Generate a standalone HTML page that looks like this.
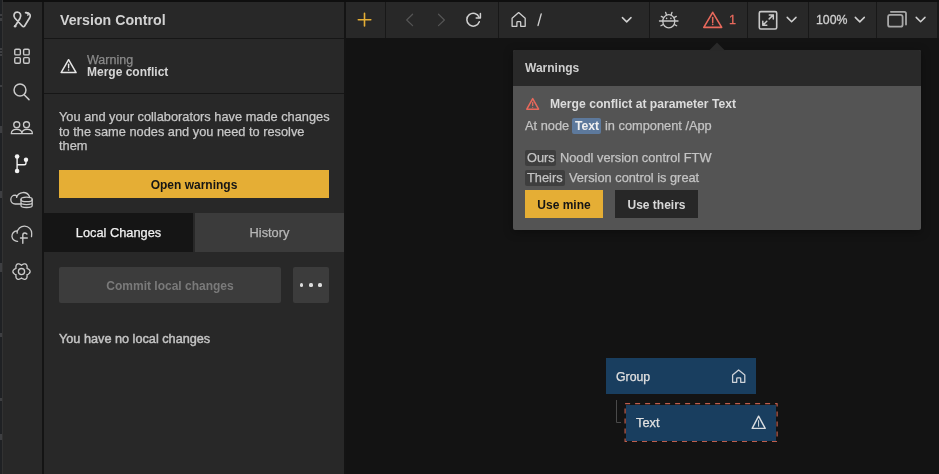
<!DOCTYPE html>
<html><head><meta charset="utf-8">
<style>
*{box-sizing:border-box;margin:0;padding:0}
html,body{width:939px;height:474px;overflow:hidden;background:#131313;font-family:"Liberation Sans",sans-serif;-webkit-font-smoothing:antialiased}
.a{position:absolute}
.t{position:absolute;white-space:nowrap;line-height:16px;will-change:transform}
.n{font-size:12.8px;-webkit-text-stroke:0.25px currentColor}
.b{font-weight:700;font-size:12px}
svg{position:absolute;overflow:visible}
</style></head><body>
<!-- top strip -->
<div class="a" style="left:3px;top:0;width:936px;height:2px;background:#0f0f0f"></div>
<!-- left edge strip -->
<div class="a" style="left:0;top:0;width:2px;height:474px;background:#1f2124"></div>
<div class="a" style="left:2px;top:0;width:1px;height:474px;background:#323232"></div>
<div class="a" style="left:0;top:14px;width:2px;height:2px;background:#3e3f42"></div>
<div class="a" style="left:0;top:18px;width:2px;height:3px;background:#3e3f42"></div>
<div class="a" style="left:0;top:48px;width:2px;height:2px;background:#3e3f42"></div>
<div class="a" style="left:0;top:51px;width:2px;height:2px;background:#3e3f42"></div>
<div class="a" style="left:0;top:54px;width:2px;height:2px;background:#3e3f42"></div>
<div class="a" style="left:0;top:85px;width:2px;height:2px;background:#3e3f42"></div>
<div class="a" style="left:0;top:126px;width:2px;height:7px;background:#3e3f42"></div>
<div class="a" style="left:0;top:191px;width:2px;height:7px;background:#3e3f42"></div>
<div class="a" style="left:0;top:263px;width:2px;height:9px;background:#3e3f42"></div>
<div class="a" style="left:0;top:333px;width:2px;height:4px;background:#3e3f42"></div>
<div class="a" style="left:0;top:398px;width:2px;height:3px;background:#3e3f42"></div>
<div class="a" style="left:0;top:434px;width:2px;height:6px;background:#3e3f42"></div>
<!-- sidebar -->
<div class="a" style="left:3px;top:2px;width:39px;height:472px;background:#282828"></div>
<div class="a" style="left:42px;top:2px;width:2px;height:472px;background:#141414"></div>
<!-- panel -->
<div class="a" style="left:44px;top:2px;width:300px;height:472px;background:#282828"></div>
<div class="a" style="left:344px;top:2px;width:2px;height:472px;background:#141414"></div>
<div class="a" style="left:44px;top:38px;width:300px;height:1px;background:#161616"></div>
<div class="a" style="left:44px;top:93px;width:300px;height:1px;background:#161616"></div>

<div class="t" style="left:60px;top:12px;font-size:14.2px;font-weight:700;color:#d2d2d2">Version Control</div>

<div class="t" style="left:87px;top:52px;font-size:12.5px;color:#8a8a8a;-webkit-text-stroke:0.25px #8a8a8a">Warning</div>
<div class="t b" style="left:87px;top:64px;color:#d6d6d6">Merge conflict</div>

<div class="t n" style="left:59px;top:110.4px;color:#c8c8c8;line-height:14.5px;white-space:normal;width:290px">You and your collaborators have made changes<br>to the same nodes and you need to resolve<br>them</div>

<div class="a" style="left:59px;top:170px;width:270px;height:28px;background:#e5ae35"></div>
<div class="t b" style="left:59px;width:270px;text-align:center;top:177px;color:#151515">Open warnings</div>

<div class="a" style="left:44px;top:213px;width:149px;height:39px;background:#151515"></div>
<div class="a" style="left:195px;top:213px;width:149px;height:39px;background:#3b3b3b"></div>
<div class="t n" style="left:44px;width:149px;text-align:center;top:225px;color:#f0f0f0">Local Changes</div>
<div class="t n" style="left:195px;width:149px;text-align:center;top:225px;color:#b8b8b8">History</div>

<div class="a" style="left:59px;top:267px;width:222px;height:36px;background:#3c3c3c;border-radius:2px"></div>
<div class="t b" style="left:59px;width:222px;text-align:center;top:278px;color:#7a7a7a">Commit local changes</div>
<div class="a" style="left:293px;top:267px;width:36px;height:36px;background:#3c3c3c;border-radius:2px"></div>
<div class="a" style="left:300.0px;top:283.4px;width:3.2px;height:3.2px;border-radius:50%;background:#dcdcdc"></div>
<div class="a" style="left:309.4px;top:283.4px;width:3.2px;height:3.2px;border-radius:50%;background:#dcdcdc"></div>
<div class="a" style="left:318.4px;top:283.4px;width:3.2px;height:3.2px;border-radius:50%;background:#dcdcdc"></div>

<div class="t" style="left:59px;top:331.2px;color:#c4c4c4;font-size:12.7px;-webkit-text-stroke:0.45px #c4c4c4">You have no local changes</div>

<!-- toolbar -->
<div class="a" style="left:346px;top:2px;width:593px;height:36px;background:#282828"></div>
<div class="a" style="left:385px;top:2px;width:1px;height:36px;background:#181818"></div>
<div class="a" style="left:498px;top:2px;width:1px;height:36px;background:#181818"></div>
<div class="a" style="left:649px;top:2px;width:1px;height:36px;background:#181818"></div>
<div class="a" style="left:747px;top:2px;width:1px;height:36px;background:#181818"></div>
<div class="a" style="left:808px;top:2px;width:1px;height:36px;background:#181818"></div>
<div class="a" style="left:876px;top:2px;width:1px;height:36px;background:#181818"></div>
<div class="a" style="left:937px;top:2px;width:2px;height:36px;background:#181818"></div>

<div class="t" style="left:816px;top:12px;font-size:12.3px;color:#d0d0d0;-webkit-text-stroke:0.3px #d0d0d0">100%</div>
<div class="t" style="left:728.5px;top:12px;font-size:12.5px;color:#e8695c;-webkit-text-stroke:0.3px #e8695c">1</div>

<!-- popup -->
<div class="a" style="left:513px;top:50px;width:408px;height:180px;background:#545454;border-radius:2px;box-shadow:0 2px 10px rgba(0,0,0,0.35)"></div>
<div class="a" style="left:513px;top:50px;width:408px;height:36px;background:#292929;border-radius:2px 2px 0 0"></div>
<svg style="left:0;top:0" width="1" height="1"><path d="M709 50.5 L717 42.5 L725 50.5 Z" fill="#292929"/></svg>
<div class="t b" style="left:525px;top:60px;color:#cfcfcf">Warnings</div>

<div class="t b" style="left:549.5px;top:96.4px;color:#dcdcdc;font-size:12.15px">Merge conflict at parameter Text</div>
<div class="t n" style="left:525px;top:118px;color:#c4c4c4">At node</div>
<div class="a" style="left:572px;top:118px;width:29px;height:16px;background:#5d799c;border-radius:2px"></div>
<div class="t b" style="left:575px;top:118px;color:#f0f0f0;font-size:12.2px">Text</div>
<div class="t n" style="left:605px;top:118px;color:#c4c4c4">in component /App</div>

<div class="a" style="left:525px;top:150px;width:31px;height:16px;background:#3e3e3e;border-radius:2px"></div>
<div class="t n" style="left:527px;top:150px;color:#c4c4c4">Ours</div>
<div class="t n" style="left:560px;top:150px;color:#c4c4c4">Noodl version control FTW</div>
<div class="a" style="left:525px;top:170px;width:40px;height:16px;background:#3e3e3e;border-radius:2px"></div>
<div class="t n" style="left:527px;top:170px;color:#c4c4c4">Theirs</div>
<div class="t n" style="left:569px;top:170px;color:#c4c4c4">Version control is great</div>

<div class="a" style="left:525px;top:190px;width:78px;height:28px;background:#e5ae35"></div>
<div class="t b" style="left:525px;width:78px;text-align:center;top:196.5px;color:#151515">Use mine</div>
<div class="a" style="left:615px;top:190px;width:83px;height:28px;background:#272727"></div>
<div class="t b" style="left:615px;width:83px;text-align:center;top:196.5px;color:#d8d8d8">Use theirs</div>

<!-- nodes -->
<div class="a" style="left:606px;top:358.3px;width:150px;height:36.2px;background:#193e5f"></div>
<div class="t" style="left:616px;top:369.2px;font-size:12.3px;color:#e0e0e0;-webkit-text-stroke:0.25px #e0e0e0">Group</div>
<div class="a" style="left:626px;top:404.5px;width:150px;height:36px;background:#193e5f"></div>
<div class="t" style="left:636px;top:415px;font-size:12.8px;color:#e0e0e0;-webkit-text-stroke:0.25px #e0e0e0">Text</div>

<svg style="left:0;top:0" width="939" height="474" viewBox="0 0 939 474" fill="none" stroke-linecap="round" stroke-linejoin="round">
  <!-- node dashed border + connector -->
  <rect x="625.1" y="403.6" width="152" height="37.9" stroke="#bd5d4d" stroke-width="1.2" stroke-dasharray="5 5" stroke-linecap="butt"/>
  <path d="M616.5 400 V422.5 H621" stroke="#4a4a4a" stroke-width="1" stroke-linecap="butt"/>
  <!-- node icons -->
  <path d="M732.6 382.3 V374.9 L738.6 370 L744.8 374.9 V382.3 H740.7 V378.5 Q740.7 377.9 740.1 377.9 H737.3 Q736.7 377.9 736.7 378.5 V382.3 Z" stroke="#cdd2d8" stroke-width="1.3"/>
  <path d="M758.6 416.2 L765.2 428.4 H752.2 Z" stroke="#d8dce0" stroke-width="1.4"/>
  <path d="M758.6 420.6 V426.3" stroke="#d8dce0" stroke-width="1"/>

  <!-- panel warning icon -->
  <path d="M68.6 59.7 L76.1 72.6 H61.1 Z" stroke="#e6e6e6" stroke-width="1.5"/>
  <path d="M68.6 64.3 V67.7" stroke="#e6e6e6" stroke-width="1.4"/>
  <circle cx="68.6" cy="70" r="0.8" fill="#e6e6e6" stroke="none"/>
  <!-- popup warning icon -->
  <path d="M532.7 98.6 L538.6 109.2 H526.8 Z" stroke="#e8695c" stroke-width="1.5"/>
  <path d="M532.7 102.4 V105.4" stroke="#e8695c" stroke-width="1.3"/>
  <circle cx="532.7" cy="107.3" r="0.6" fill="#e8695c" stroke="none"/>

  <!-- toolbar icons -->
  <path d="M358.3 19.8 H370.8 M364.5 13.2 V26" stroke="#e5ae35" stroke-width="1.6"/>
  <path d="M412.6 14.2 L406.7 20 L412.6 25.6" stroke="#555" stroke-width="1.2"/>
  <path d="M438.5 14.2 L444.4 20 L438.5 25.6" stroke="#555" stroke-width="1.2"/>
  <path d="M479.3 21.8 A6.4 6.4 0 1 1 479.2 17.4" stroke="#d0d0d0" stroke-width="1.5"/>
  <path d="M480.4 13.6 V17.9 H476.2" stroke="#d0d0d0" stroke-width="1.5"/>
  <path d="M512.1 26.3 V18.3 L518.66 12.6 L525.2 18.3 V26.3 H520.7 V22.4 Q520.7 21.7 520 21.7 H517.6 Q516.9 21.7 516.9 22.4 V26.3 Z" stroke="#cfcfcf" stroke-width="1.3"/>
  <path d="M541.2 14 L538 25.5" stroke="#cfcfcf" stroke-width="1.3"/>
  <path d="M622.4 17.6 L626.7 21.9 L631 17.6" stroke="#d0d0d0" stroke-width="1.5"/>
  <!-- bug -->
  <ellipse cx="668.8" cy="21.3" rx="6" ry="6.6" stroke="#c8c8c8" stroke-width="1.3"/>
  <path d="M659.5 21 H678" stroke="#c8c8c8" stroke-width="1.3"/>
  <path d="M666.5 15 L665.6 12.3 M671.1 15 L672 12.3 M663.2 17.4 L661.3 16.4 M674.4 17.4 L676.3 16.4 M663.1 24.6 L660.9 25.8 M674.5 24.6 L676.7 25.8" stroke="#c8c8c8" stroke-width="1.3"/>
  <circle cx="666.6" cy="18.4" r="0.8" fill="#c8c8c8" stroke="none"/>
  <circle cx="670.9" cy="18.4" r="0.8" fill="#c8c8c8" stroke="none"/>
  <!-- red warning -->
  <path d="M712.7 12.3 L721.7 27.4 H703.8 Z" stroke="#e8695c" stroke-width="1.6"/>
  <path d="M712.7 17.6 V22.5" stroke="#e8695c" stroke-width="1.5"/>
  <circle cx="712.7" cy="24.4" r="0.8" fill="#e8695c" stroke="none"/>
  <!-- expand -->
  <rect x="759.3" y="11.6" width="17.4" height="17.4" rx="1.5" stroke="#c8c8c8" stroke-width="1.6"/>
  <path d="M762.8 25.3 L766.8 21.3 M769.2 18.9 L773.3 14.9 M769.3 14.9 H773.3 V18.9 M762.8 21.3 V25.3 H766.8" stroke="#c8c8c8" stroke-width="1.5"/>
  <path d="M787.2 17.4 L791.6 21.8 L796 17.4" stroke="#d0d0d0" stroke-width="1.5"/>
  <path d="M855.3 17.4 L859.8 21.9 L864.3 17.4" stroke="#d0d0d0" stroke-width="1.5"/>
  <!-- windows -->
  <rect x="888.1" y="14.9" width="14.5" height="11.8" rx="2" stroke="#a8a8a8" stroke-width="1.8"/>
  <path d="M890.9 11.8 H904.3 Q906 11.8 906 13.5 V24.6" stroke="#a8a8a8" stroke-width="1.8"/>
  <path d="M916.2 17.4 L920.6 21.8 L925 17.4" stroke="#d0d0d0" stroke-width="1.5"/>

  <!-- sidebar icons -->
  <path d="M15.1 26.2 L20 18.2 C21.5 15.5 20.5 12.2 17.3 12.2 C14.2 12.2 13 15.5 14.8 18 L22.2 26 C23 27 24 27 24.6 26 L29.8 17.5 C30.7 16 30.2 14 28.5 13.3 L25.6 12.6" stroke="#cfcfcf" stroke-width="1.7"/>
  <circle cx="15.1" cy="26.2" r="1.3" fill="#cfcfcf" stroke="none"/>
  <path d="M26.2 12.4 L28.6 13.2 L27.8 15.2" stroke="#cfcfcf" stroke-width="1.4"/>
  <rect x="14.75" y="49.3" width="5.6" height="5.6" rx="1.2" stroke="#cacaca" stroke-width="1.4"/>
  <rect x="23.6" y="49.3" width="5.6" height="5.6" rx="1.2" stroke="#cacaca" stroke-width="1.4"/>
  <rect x="14.75" y="57.6" width="5.6" height="5.6" rx="1.2" stroke="#cacaca" stroke-width="1.4"/>
  <rect x="23.6" y="57.6" width="5.6" height="5.6" rx="1.2" stroke="#cacaca" stroke-width="1.4"/>
  <circle cx="20" cy="90" r="5.95" stroke="#cacaca" stroke-width="1.5"/>
  <path d="M24.4 95 L29 99.6" stroke="#cacaca" stroke-width="1.5"/>
  <circle cx="16.75" cy="124.75" r="3" stroke="#cacaca" stroke-width="1.3"/>
  <circle cx="26.5" cy="124.75" r="3" stroke="#cacaca" stroke-width="1.3"/>
  <path d="M11.3 133.7 C11.3 130.6 13.6 129.3 16.6 129.3 C19.6 129.3 21.9 130.6 21.9 133.7 Z M21.9 133.7 C21.9 130.6 24.2 129.3 27.2 129.3 C30.2 129.3 32.4 130.6 32.4 133.7 Z" stroke="#cacaca" stroke-width="1.3"/>
  <!-- branch -->
  <path d="M17.1 156.5 V171 M17.1 164.8 H24.3 Q26 164.8 26 163 V159.8" stroke="#f2f2f2" stroke-width="1.4"/>
  <circle cx="17.1" cy="156.5" r="2.3" fill="#f2f2f2" stroke="none"/>
  <circle cx="17.1" cy="171" r="2.3" fill="#f2f2f2" stroke="none"/>
  <circle cx="26" cy="159.8" r="2.2" fill="#f2f2f2" stroke="none"/>
  <!-- cloud db -->
  <path d="M20.6 204 H15.2 A4.4 4.4 0 0 1 15.2 195.2 Q16.8 195.3 16.7 197.4 M16.6 197.4 A6.9 6.9 0 0 1 29.5 196.6" stroke="#cacaca" stroke-width="1.3"/>
  <path d="M21 199.4 V205.4 A5.6 2.1 0 0 0 32.2 205.4 V199.4" fill="#272727" stroke="none"/>
  <ellipse cx="26.6" cy="199.4" rx="5.6" ry="2.2" fill="#272727" stroke="#cacaca" stroke-width="1.3"/>
  <path d="M21 199.4 V205.4 A5.6 2.1 0 0 0 32.2 205.4 V199.4 M21 202.5 A5.6 2.1 0 0 0 32.2 202.5" stroke="#cacaca" stroke-width="1.3"/>
  <!-- cloud f -->
  <path d="M17.6 241.3 A5.2 5.2 0 1 1 16.7 230.9 Q17.4 232 17.2 233.2 M17.1 233.1 A7.3 7.3 0 0 1 31.7 233.6 Q31.7 235.2 31.5 236.6" stroke="#cacaca" stroke-width="1.3"/>
  <path d="M26.9 234 Q26 233 24.6 233 Q22.8 233 22.8 235.2 V243.3 M20.5 238 H27.3" stroke="#cacaca" stroke-width="1.4"/>
  <!-- gear -->
  <path d="M30.10 271.60 L30.07 271.97 L29.96 272.34 L29.80 272.69 L29.58 273.02 L29.31 273.33 L29.01 273.61 L28.69 273.87 L28.36 274.10 L28.02 274.30 L27.68 274.48 L27.35 274.65 L26.96 274.75 L27.06 275.14 L27.09 275.51 L27.10 275.90 L27.09 276.29 L27.06 276.69 L27.00 277.10 L26.91 277.50 L26.77 277.88 L26.60 278.24 L26.37 278.56 L26.11 278.83 L25.80 279.05 L25.46 279.20 L25.09 279.30 L24.70 279.33 L24.31 279.31 L23.91 279.23 L23.51 279.11 L23.13 278.96 L22.77 278.78 L22.42 278.60 L22.09 278.40 L21.79 278.19 L21.50 277.90 L21.21 278.19 L20.91 278.40 L20.58 278.60 L20.23 278.78 L19.87 278.96 L19.49 279.11 L19.09 279.23 L18.69 279.31 L18.30 279.33 L17.91 279.30 L17.54 279.20 L17.20 279.05 L16.89 278.83 L16.63 278.56 L16.40 278.24 L16.23 277.88 L16.09 277.50 L16.00 277.10 L15.94 276.69 L15.91 276.29 L15.90 275.90 L15.91 275.51 L15.94 275.14 L16.04 274.75 L15.65 274.65 L15.32 274.48 L14.98 274.30 L14.64 274.10 L14.31 273.87 L13.99 273.61 L13.69 273.33 L13.42 273.02 L13.20 272.69 L13.04 272.34 L12.93 271.97 L12.90 271.60 L12.93 271.23 L13.04 270.86 L13.20 270.51 L13.42 270.18 L13.69 269.87 L13.99 269.59 L14.31 269.33 L14.64 269.10 L14.98 268.90 L15.32 268.72 L15.65 268.55 L16.04 268.45 L15.94 268.06 L15.91 267.69 L15.90 267.30 L15.91 266.91 L15.94 266.51 L16.00 266.10 L16.09 265.70 L16.23 265.32 L16.40 264.96 L16.63 264.64 L16.89 264.37 L17.20 264.15 L17.54 264.00 L17.91 263.90 L18.30 263.87 L18.69 263.89 L19.09 263.97 L19.49 264.09 L19.87 264.24 L20.23 264.42 L20.58 264.60 L20.91 264.80 L21.21 265.01 L21.50 265.30 L21.79 265.01 L22.09 264.80 L22.42 264.60 L22.77 264.42 L23.13 264.24 L23.51 264.09 L23.91 263.97 L24.31 263.89 L24.70 263.87 L25.09 263.90 L25.46 264.00 L25.80 264.15 L26.11 264.37 L26.37 264.64 L26.60 264.96 L26.77 265.32 L26.91 265.70 L27.00 266.10 L27.06 266.51 L27.09 266.91 L27.10 267.30 L27.09 267.69 L27.06 268.06 L26.96 268.45 L27.35 268.55 L27.68 268.72 L28.02 268.90 L28.36 269.10 L28.69 269.33 L29.01 269.59 L29.31 269.87 L29.58 270.18 L29.80 270.51 L29.96 270.86 L30.07 271.23 L30.10 271.60Z" stroke="#cacaca" stroke-width="1.3"/>
  <circle cx="21.5" cy="271.6" r="3.1" stroke="#cacaca" stroke-width="1.3"/>
</svg>
</body></html>
